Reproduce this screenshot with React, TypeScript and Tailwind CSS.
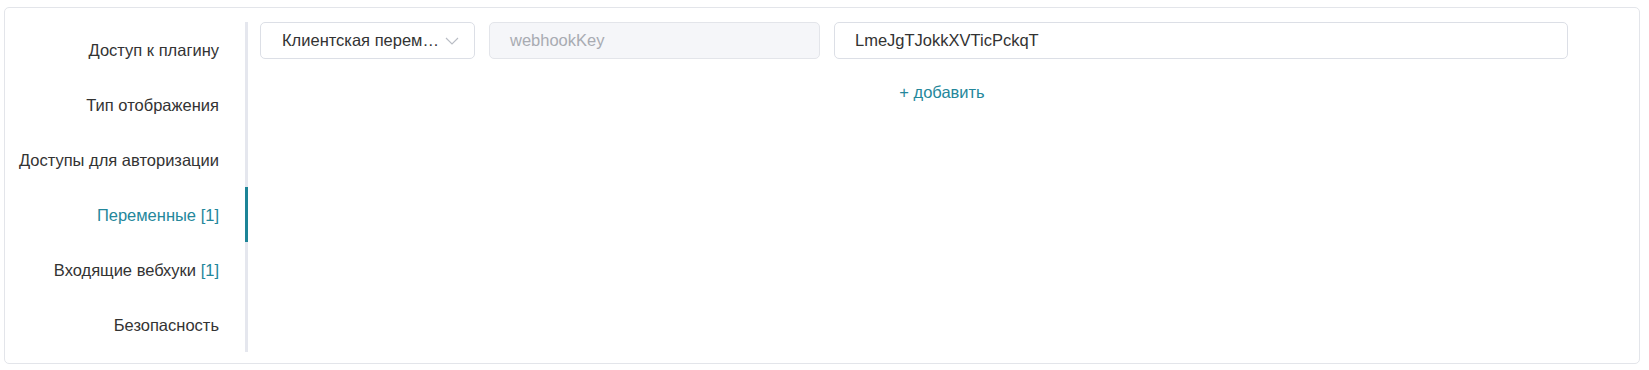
import { useState } from "react";

const tabs = [
  { label: "Доступ к плагину" },
  { label: "Тип отображения" },
  { label: "Доступы для авторизации" },
  { label: "Переменные", count: 1 },
  { label: "Входящие вебхуки", count: 1 },
  { label: "Безопасность" },
];

const ChevronDown = () => (
  <svg width="14" height="8" viewBox="0 0 14 8" fill="none" stroke="#b8bcc4" strokeWidth="1.1">
    <polyline points="1 1 7 7 13 1" />
  </svg>
);

export default function App() {
  const [active, setActive] = useState(3);

  return (
    <div className="pt-[7px] pl-[4px] pr-[9px] pb-[6px] bg-white font-['Liberation_Sans',Arial,sans-serif] text-[16.5px] text-[#333]">
      <div className="flex h-[357px] rounded-[5px] border border-[#e3e5ea] bg-white pt-[14px]">
        {/* ── Left tabs ── */}
        <nav className="flex w-[243px] shrink-0 flex-col self-start border-r-[3px] border-[#e5e7ee]">
          {tabs.map((t, i) => (
            <button
              key={t.label}
              onClick={() => setActive(i)}
              className={`relative flex h-[55px] items-center justify-end pr-[26px] leading-5 ${
                i === active ? "text-[#24879b]" : "text-[#333]"
              }`}
            >
              <span>
                {t.label}
                {t.count !== undefined && <span className="text-[#24879b]"> [{t.count}]</span>}
              </span>
              {i === active && <span className="absolute -right-[3px] top-0 h-full w-[3px] bg-[#1d8497]" />}
            </button>
          ))}
        </nav>

        {/* ── Variables ── */}
        <div className="flex flex-1 flex-col pl-3 pr-[15px]">
          <div className="flex items-center">
            <button className="flex h-[37px] w-[215px] items-center justify-between rounded-[5px] border border-[#dcdfe6] bg-white pl-[21px] pr-[15px]">
              <span className="truncate">Клиентская перем…</span>
              <ChevronDown />
            </button>
            <div className="ml-[14px] flex h-[37px] w-[331px] items-center rounded-[5px] border border-[#e3e5ea] bg-[#f5f6f9] px-5 text-[#a8abb2]">
              webhookKey
            </div>
            <input
              defaultValue="LmeJgTJokkXVTicPckqT"
              className="ml-[14px] h-[37px] w-[734px] rounded-[5px] border border-[#dcdfe6] bg-white px-5 outline-none"
            />
          </div>
          <button className="mx-auto mt-[23px] leading-5 text-[#24879b]">+ добавить</button>
        </div>
      </div>
    </div>
  );
}
